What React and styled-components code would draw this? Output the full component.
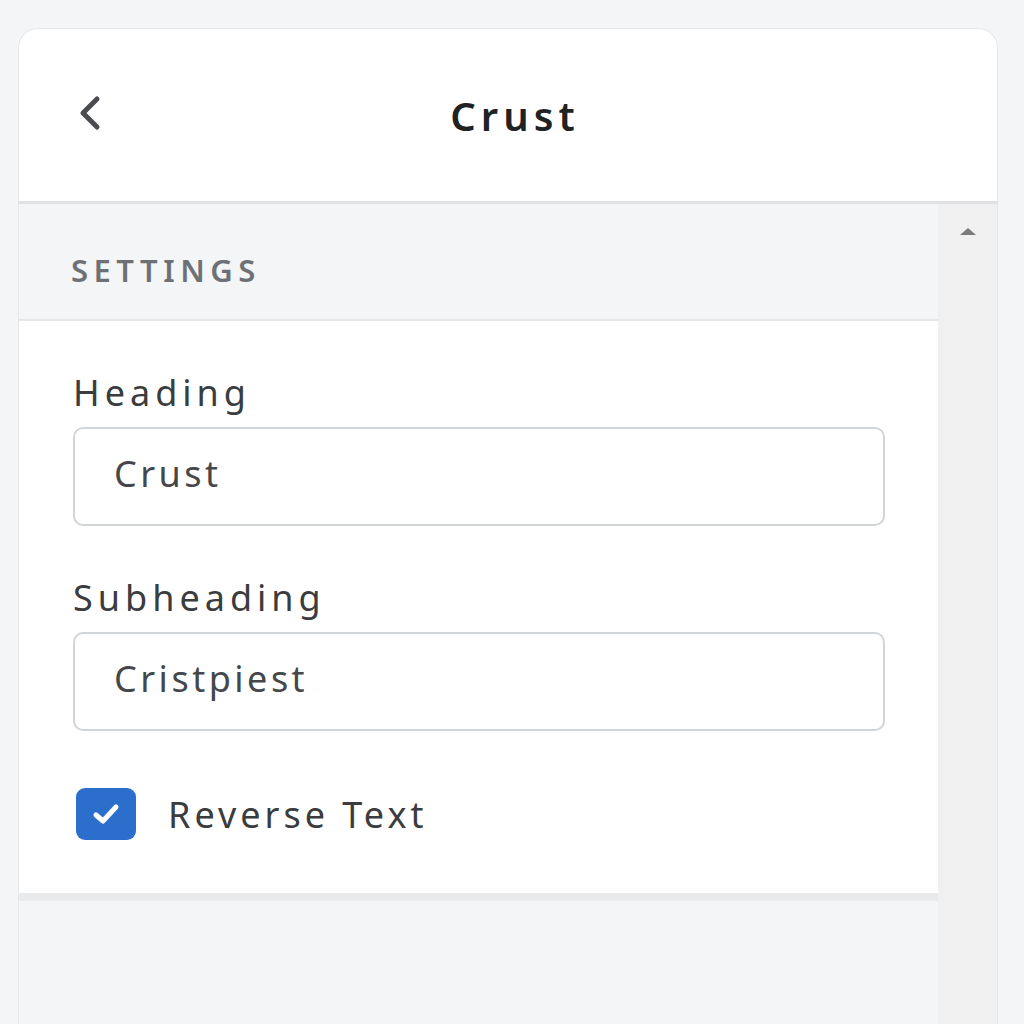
import styled, { createGlobalStyle } from "styled-components";

const GlobalStyle = createGlobalStyle`
  * {
    box-sizing: border-box;
  }
  body {
    margin: 0;
    background: #f4f5f7;
    font-family: "Noto Sans", "Open Sans", sans-serif;
  }
`;

const BackIcon = () => (
  <svg width="30" height="36" viewBox="0 0 30 36" fill="none">
    <path
      d="M22 4 L8 18 L22 32"
      stroke="#4a4c4f"
      strokeWidth="5"
      strokeLinecap="round"
      strokeLinejoin="round"
    />
  </svg>
);

const CheckIcon = () => (
  <svg width="28" height="22" viewBox="0 0 28 22" fill="none">
    <path
      d="M4 12 L11 18 L24 4"
      stroke="#ffffff"
      strokeWidth="5"
      strokeLinecap="round"
      strokeLinejoin="round"
    />
  </svg>
);

const Field = ({ label, value }) => (
  <FieldWrap>
    <Label>{label}</Label>
    <Input type="text" defaultValue={value} />
  </FieldWrap>
);

const App = () => {
  return (
    <Page>
      <GlobalStyle />
      <Card>
        <Header>
          <BackButton>
            <BackIcon />
          </BackButton>
          <Title>Crust</Title>
          <span />
        </Header>
        <Body>
          <Content>
            <SectionTitle>Settings</SectionTitle>
            <Section>
              <Field label="Heading" value="Crust" />
              <Field label="Subheading" value="Cristpiest" />
              <CheckRow>
                <CheckBox>
                  <CheckIcon />
                </CheckBox>
                <CheckLabel>Reverse Text</CheckLabel>
              </CheckRow>
            </Section>
          </Content>
          <ScrollTrack>
            <ScrollArrow />
          </ScrollTrack>
        </Body>
      </Card>
    </Page>
  );
};

export default App;

const Page = styled.div`
  height: 1024px;
  overflow: hidden;
  padding: 28px 26px 0 18px;
`;

const Card = styled.div`
  height: 996px;
  display: flex;
  flex-direction: column;
  background: #ffffff;
  border: 1px solid #e6e7e9;
  border-bottom: none;
  border-radius: 20px 20px 0 0;
  overflow: hidden;
`;

const Header = styled.div`
  height: 175px;
  flex-shrink: 0;
  display: grid;
  grid-template-columns: 1fr auto 1fr;
  align-items: center;
  padding: 0 56px;
  border-bottom: 3px solid #dfe1e4;
`;

const BackButton = styled.button`
  justify-self: start;
  display: flex;
  align-items: center;
  background: none;
  border: none;
  padding: 0;
  margin-bottom: 4px;
  cursor: pointer;
`;

const Title = styled.h1`
  margin: 0 0 0 14px;
  font-size: 40px;
  font-weight: 600;
  letter-spacing: 5px;
  color: #202223;
`;

const Body = styled.div`
  flex: 1;
  display: flex;
  min-height: 0;
`;

const Content = styled.div`
  flex: 1;
  background: #f4f5f7;
`;

const SectionTitle = styled.h2`
  margin: 0;
  height: 117px;
  padding: 45px 52px 0;
  font-size: 31px;
  font-weight: 600;
  letter-spacing: 5.5px;
  text-transform: uppercase;
  color: #6d7175;
  border-bottom: 2px solid #e6e7e9;
`;

const Section = styled.div`
  background: #ffffff;
  padding: 50px 53px 53px 54px;
  border-bottom: 8px solid #e9eaec;
`;

const FieldWrap = styled.div`
  margin-bottom: 50px;
`;

const Label = styled.div`
  font-size: 36px;
  line-height: 44px;
  letter-spacing: 5px;
  color: #3a3c3e;
  margin-bottom: 12px;
`;

const Input = styled.input`
  display: block;
  width: 100%;
  height: 99px;
  padding: 0 0 6px 39px;
  border: 2px solid #d2d5d8;
  border-radius: 10px;
  font-family: inherit;
  font-size: 36px;
  letter-spacing: 3.5px;
  color: #45474a;
  outline: none;
`;

const CheckRow = styled.label`
  display: flex;
  align-items: center;
  gap: 32px;
  margin-top: 57px;
  padding-left: 3px;
`;

const CheckBox = styled.span`
  width: 60px;
  height: 52px;
  border-radius: 9px;
  background: #2c6ecb;
  display: flex;
  align-items: center;
  justify-content: center;
`;

const CheckLabel = styled.span`
  font-size: 36px;
  letter-spacing: 4px;
  color: #3a3c3e;
`;

const ScrollTrack = styled.div`
  width: 59px;
  background: #f0f0f1;
  display: flex;
  justify-content: center;
  padding-top: 24px;
`;

const ScrollArrow = styled.span`
  width: 0;
  height: 0;
  border-left: 8px solid transparent;
  border-right: 8px solid transparent;
  border-bottom: 7px solid #7a7b7d;
`;
